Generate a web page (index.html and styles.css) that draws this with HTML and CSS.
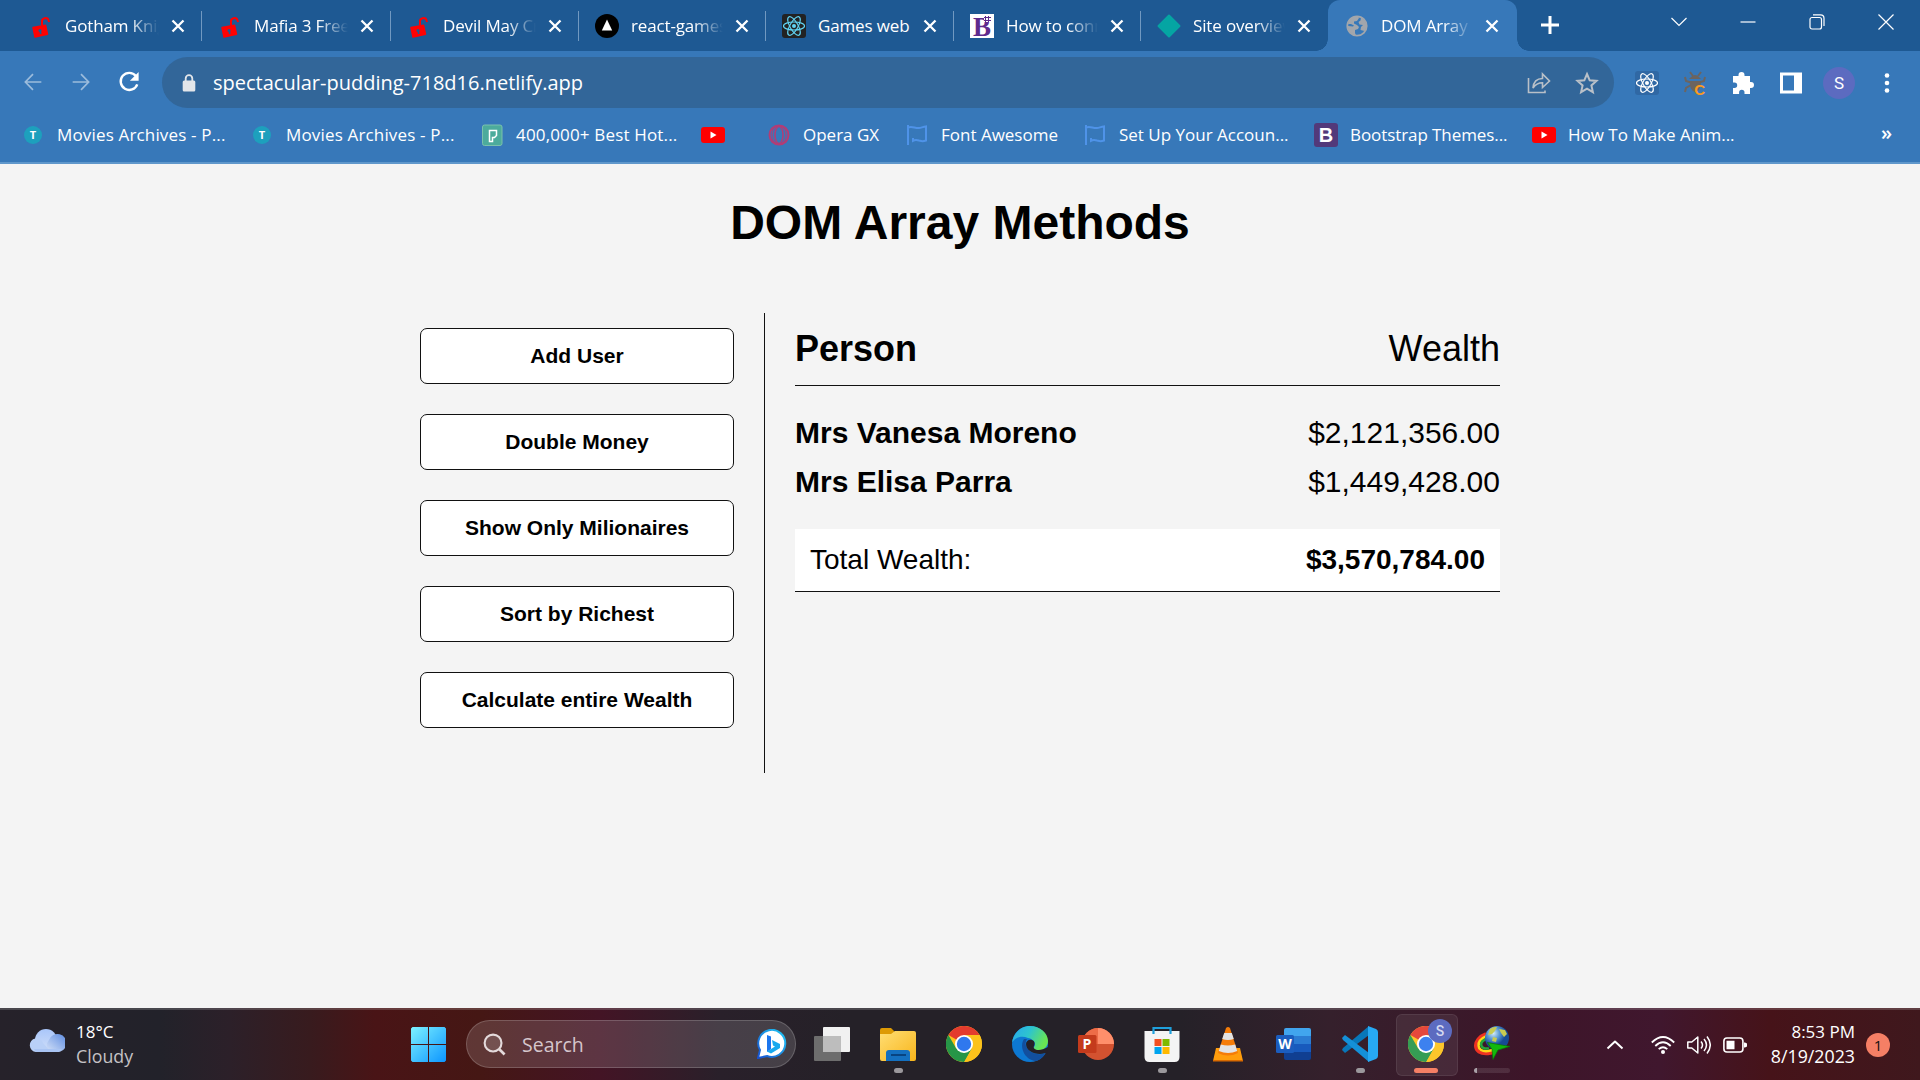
FILE: index.html
```html
<!DOCTYPE html>
<html lang="en">
<head>
<meta charset="utf-8">
<title>DOM Array Methods</title>
<link rel="stylesheet" href="styles.css">
</head>
<body>
<svg class="defs" aria-hidden="true">
  <defs>
    <symbol id="lock-open" viewBox="0 0 24 24"><g fill="#fe0202"><path d="M4 13.500l12.500-2.300 2 9-12.500 2.800z" stroke="#fe0202" stroke-width="1.500" stroke-linejoin="round"/><path d="M13 11V8c-.8-4 5.500-5.500 6.600-1.500l.5 1.500" fill="none" stroke="#fe0202" stroke-width="2"/></g><circle cx="11" cy="16.500" r="1.500" fill="#1e5993"/><path d="M10.500 17h1.600l.4 3h-1.600z" fill="#1e5993"/></symbol>
    <symbol id="close" viewBox="0 0 14 14"><path d="M1.500 1.500l11 11M12.500 1.500l-11 11" stroke="#fff" stroke-width="2.300"/></symbol>
    <symbol id="atom" viewBox="0 0 24 24"><g fill="none" stroke="currentColor" stroke-width="1.200"><ellipse cx="12" cy="12" rx="10.500" ry="4"/><ellipse cx="12" cy="12" rx="10.500" ry="4" transform="rotate(60 12 12)"/><ellipse cx="12" cy="12" rx="10.500" ry="4" transform="rotate(120 12 12)"/></g><circle cx="12" cy="12" r="2" fill="currentColor"/></symbol>
    <symbol id="youtube" viewBox="0 0 24 24"><rect y="4" width="24" height="16" rx="3" fill="#f00"/><path d="M9.500 8.500l6 3.500-6 3.500z" fill="#fff"/></symbol>
    <symbol id="flag" viewBox="0 0 24 24"><path d="M3 2v20M3 4.500c4-2 7 1 11 .5 2-.3 4-1 7-1.500v14c-4 1.500-5 .5-7 0-2-.6-4-.8-6 .3V15" fill="none" stroke="#4f93e8" stroke-width="2"/></symbol>
    <symbol id="chrome" viewBox="0 0 36 36"><circle cx="18" cy="18" r="18" fill="#fcc21b"/><path d="M18 18L2.400 9A18 18 0 0 1 33.600 9z" fill="#e33b2e"/><path d="M18 9h15.600L18 18z" fill="#e33b2e"/><path d="M2.400 9l7.800 13.500L18 27l.2 9A18 18 0 0 1 2.400 9z" fill="#269647"/><path d="M18.200 36L26 22.500 18 27 10.200 22.500z" fill="#269647"/><path d="M18 9h15.600A18 18 0 0 1 18.200 36L25.800 22.500z" fill="#fcc21b"/><circle cx="18" cy="18" r="9" fill="#fff"/><circle cx="18" cy="18" r="7.200" fill="#2f78ee"/></symbol>
  </defs>
</svg>

<div class="screen">
  <header class="browser">
    <div class="tabstrip">
      <div class="tabs">
        <div class="tab"><svg class="fav"><use href="#lock-open"/></svg><span class="tab-title">Gotham Knights</span><svg class="tab-close"><use href="#close"/></svg></div>
        <div class="tab"><svg class="fav"><use href="#lock-open"/></svg><span class="tab-title">Mafia 3 Free D</span><svg class="tab-close"><use href="#close"/></svg></div>
        <div class="tab"><svg class="fav"><use href="#lock-open"/></svg><span class="tab-title">Devil May Cry</span><svg class="tab-close"><use href="#close"/></svg></div>
        <div class="tab"><svg class="fav" viewBox="0 0 24 24"><circle cx="12" cy="12" r="12"/><path d="M12 5.500l5.200 11H6.800z" fill="#fff"/></svg><span class="tab-title">react-games-</span><svg class="tab-close"><use href="#close"/></svg></div>
        <div class="tab"><svg class="fav fav-react"><use href="#atom"/></svg><span class="tab-title plain">Games web</span><svg class="tab-close"><use href="#close"/></svg></div>
        <div class="tab"><span class="fav fav-b">B<i></i></span><span class="tab-title">How to conne</span><svg class="tab-close"><use href="#close"/></svg></div>
        <div class="tab last"><svg class="fav" viewBox="0 0 24 24"><path d="M12 1.500L22.500 12 12 22.500 1.500 12z" fill="#05a5a3" stroke="#05a5a3" stroke-width="2" stroke-linejoin="round"/></svg><span class="tab-title">Site overview</span><svg class="tab-close"><use href="#close"/></svg></div>
        <div class="tab active"><svg class="fav" viewBox="0 0 24 24"><circle cx="12" cy="12" r="9.700" fill="#3778b9" stroke="#a2a6ac" stroke-width="1.800"/><path d="M3 10c1-5 5-8 10-7.500l1 1.500-2 3-3 .5v2l3 1.500 2 2-1 2-3 1v3l1 2.500C6 21.500 2.500 16 3 12l5 .5 1-1L6 10z M16 3.500c4 2 6 6 5.500 10l-2 3.500-4-1 .5-3 2-2-3.500-.5-1-2.500 2-1.500z" fill="#a2a6ac"/></svg><span class="tab-title">DOM Array M</span><svg class="tab-close"><use href="#close"/></svg></div>
      </div>
      <svg class="new-tab" viewBox="0 0 20 20"><path d="M10 1v18M1 10h18" stroke="#fff" stroke-width="3"/></svg>
      <div class="window-controls">
        <svg viewBox="0 0 16 16"><path d="M.5 4L8 11.500 15.500 4" /></svg>
        <svg viewBox="0 0 16 16"><path d="M.5 8h15"/></svg>
        <svg viewBox="0 0 16 16"><rect x="1" y="3.500" width="11.500" height="11.500" rx="2"/><path d="M4 .8h7.500q3.500 0 3.500 3.500V12"/></svg>
        <svg viewBox="0 0 16 16"><path d="M.5.5l15 15M15.500.5l-15 15"/></svg>
      </div>
    </div>

    <div class="toolbar">
      <div class="nav">
        <svg viewBox="0 0 24 24" class="dim"><path d="M22 12H3M12 2.500L2.800 12l9.200 9.500" /></svg>
        <svg viewBox="0 0 24 24" class="dim"><path d="M2 12h19M12 2.500l9.200 9.500-9.200 9.500" /></svg>
        <svg viewBox="0 0 24 24"><path d="M19.500 5.500A9.300 9.300 0 1 0 21 14.500" class="reload"/><path d="M22.500 1v9.500H13z" fill="#fff" stroke="none"/></svg>
      </div>
      <div class="omnibox">
        <svg class="padlock" viewBox="0 0 14 18"><rect x=".7" y="6.500" width="12.600" height="11" rx="1.500" fill="#e3e6ea"/><path d="M3.700 8V4.500a3.300 3.300 0 0 1 6.600 0V8" fill="none" stroke="#e3e6ea" stroke-width="1.800"/></svg>
        <span class="url">spectacular-pudding-718d16.netlify.app</span>
        <svg class="omni-icon" viewBox="0 0 24 24"><path d="M1.500 7v14.500h16.500V19.500M6 17c.5-6 4-9.500 9.500-9.500V3l7 7-7 6.500v-4.700C11 11.800 8 14 6 17z" fill="none" stroke="#b9c0c8" stroke-width="1.600"/></svg>
        <svg class="omni-icon star" viewBox="0 0 24 24"><path d="M12 3l2.700 6.300 6.800.6-5.100 4.500 1.500 6.700L12 17.600l-5.900 3.500 1.500-6.700L2.500 9.900l6.800-.6z" fill="none" stroke="#b9c0c8" stroke-width="2"/></svg>
      </div>
      <div class="extensions">
        <svg class="ext-react"><use href="#atom"/></svg>
        <span class="ext-bug"><svg viewBox="0 0 24 24"><g fill="none" stroke="#6c645f" stroke-width="2"><path d="M7 1l3 4M18 1l-3 4M2 6l1 4 5 1.500M22 6l-1 4-5 1.500M2 21l1-4 5-3"/></g><path d="M8 6q4-4 8 0l2 2H6zM7 10h11q0 10-6 11Q6 19 7 10z" fill="#6c645f"/></svg><b>C</b></span>
        <svg viewBox="0 0 24 24"><path d="M2 5h5.500V4a3 3 0 0 1 6 0v1H19v6h1a3 3 0 0 1 0 6h-1v6h-5.500v-1.500a2.700 2.700 0 0 0-5.400 0V23H2v-6h1.500a2.700 2.700 0 0 0 0-5.400H2z" fill="#fff"/></svg>
        <svg viewBox="0 0 24 24"><path d="M1 1.500h22v21H1zM4 4.500v15h11v-15z" fill="#fff" fill-rule="evenodd"/></svg>
        <span class="avatar">S</span>
        <svg viewBox="0 0 24 24"><g fill="#fff"><circle cx="12" cy="4.500" r="2.300"/><circle cx="12" cy="12" r="2.300"/><circle cx="12" cy="19.500" r="2.300"/></g></svg>
      </div>
    </div>

    <nav class="bookmarks">
      <a class="wide"><span class="bm-icon"><i class="t-icon">T</i></span>Movies Archives - P...</a>
      <a class="wide"><span class="bm-icon"><i class="t-icon">T</i></span>Movies Archives - P...</a>
      <a class="wide"><svg class="bm-icon" viewBox="0 0 24 24"><rect x="2.500" y="2" width="19.500" height="20.500" rx="2" fill="#4cab9c" stroke="#7bc1ac"/><path d="M9.500 18.500V7.500h7v5l-2 2h-2v4z" fill="none" stroke="#fff" stroke-width="1.500"/></svg>400,000+ Best Hot...</a>
      <a><svg class="bm-icon"><use href="#youtube"/></svg></a>
      <a><svg class="bm-icon" viewBox="0 0 24 24"><g fill="none" stroke="#b33c75"><circle cx="12" cy="12" r="9.500" stroke-width="2"/><ellipse cx="12" cy="12" rx="4" ry="8.500" stroke-width="1.500"/><ellipse cx="12" cy="12" rx="7" ry="9" stroke-width="1"/></g></svg>Opera GX</a>
      <a><svg class="bm-icon"><use href="#flag"/></svg>Font Awesome</a>
      <a><svg class="bm-icon"><use href="#flag"/></svg>Set Up Your Accoun...</a>
      <a class="tight"><span class="bm-icon bootstrap">B</span>Bootstrap Themes...</a>
      <a><svg class="bm-icon"><use href="#youtube"/></svg>How To Make Anim...</a>
      <span class="more">»</span>
    </nav>
  </header>

  <main class="page">
    <h1>DOM Array Methods</h1>
    <div class="content">
      <aside>
        <button>Add User</button>
        <button>Double Money</button>
        <button>Show Only Milionaires</button>
        <button>Sort by Richest</button>
        <button>Calculate entire Wealth</button>
      </aside>
      <section class="people">
        <h2><strong>Person</strong><span>Wealth</span></h2>
        <div class="person"><strong>Mrs Vanesa Moreno</strong><span>$2,121,356.00</span></div>
        <div class="person"><strong>Mrs Elisa Parra</strong><span>$1,449,428.00</span></div>
        <h3><span>Total Wealth:</span><strong>$3,570,784.00</strong></h3>
      </section>
    </div>
  </main>

  <footer class="taskbar">
    <div class="weather">
      <svg viewBox="0 0 36 24"><defs><linearGradient id="cl" x2="0" y2="1"><stop stop-color="#a9c6fa"/><stop offset="1" stop-color="#cfdef8"/></linearGradient><linearGradient id="cr" x1="1" x2="0" y2="1"><stop stop-color="#5c8be0"/><stop offset="1" stop-color="#d5e2f8"/></linearGradient></defs><circle cx="17" cy="11" r="11" fill="url(#cl)"/><path d="M20 23a9 9 0 0 1 0-12 9 9 0 1 1 8 12z" fill="url(#cr)"/><path d="M7 23A6.800 6.800 0 1 1 14 14l8 9z" fill="#b9d0f7"/><path d="M5 20h28l-3 3H7z" fill="#a9c4f3"/></svg>
      <div><span>18°C</span><span class="muted">Cloudy</span></div>
    </div>
    <svg class="start" viewBox="0 0 35 35"><defs><linearGradient id="wn" x2="1" y2="1"><stop stop-color="#7df2ff"/><stop offset="1" stop-color="#0c95ff"/></linearGradient></defs><path d="M1.500 0H17v17H0V1.500zM18 0h15.500L35 1.500V17H18zM0 18h17v17H1.500L0 33.500zM18 18h17v15.500L33.500 35H18z" fill="url(#wn)"/></svg>
    <div class="search">
      <svg class="glass" viewBox="0 0 24 24"><circle cx="10.500" cy="10.500" r="8.800" fill="#fff2" stroke="#e4dadb" stroke-width="2.200"/><path d="M17 17l5.500 5.500" stroke="#e4dadb" stroke-width="2.800"/></svg>
      <span>Search</span>
      <svg class="bing" viewBox="0 0 30 30"><defs><linearGradient id="bg" x1="1" x2="0" y2="1"><stop stop-color="#20c9f5"/><stop offset="1" stop-color="#1750d0"/></linearGradient></defs><path d="M1 29l2-8a13.500 13.500 0 1 1 7 6z" fill="#fff" stroke="url(#bg)" stroke-width="2"/><path d="M10 6l4 1.500V20l-4 3z" fill="#1c76ee"/><path d="M15 11l8 4v4l-9 5.500-4-2 8-5-2-1z" fill="#17a9ee"/></svg>
    </div>
    <div class="apps">
      <div class="app"><svg viewBox="0 0 36 36"><rect x="9" y="1" width="27" height="25" rx="1" fill="#f1f1f1"/><rect x="0" y="10" width="27" height="25" rx="1" fill="#6d6d6d"/><path d="M9 10h18v16H9z" fill="#bdbdbd"/></svg></div>
      <div class="app open"><svg viewBox="0 0 36 36"><defs><linearGradient id="fd" x2="1" y2="1"><stop stop-color="#ffde74"/><stop offset="1" stop-color="#f8b51b"/></linearGradient></defs><path d="M0 9V4q0-2 2-2h9l4 4-2 4z" fill="#dd9a05"/><path d="M0 8h11l4-3h19q2 0 2 2v26q0 2-2 2H2q-2 0-2-2z" fill="url(#fd)"/><path d="M6 35V27q0-3 3-3h18q3 0 3 3v8z" fill="#1470c0"/><path d="M11 29h15" stroke="#07407a" stroke-width="1.800"/></svg></div>
      <div class="app"><svg><use href="#chrome"/></svg></div>
      <div class="app"><svg viewBox="0 0 36 36"><defs><linearGradient id="e1" x2="1" y2=".4"><stop stop-color="#28a7ef"/><stop offset=".5" stop-color="#2dc4cf"/><stop offset="1" stop-color="#68e553"/></linearGradient></defs><circle cx="18" cy="18" r="18" fill="#0d78d2"/><path d="M0 17C1 7 9 0 18 0c10 0 18 7 18 15 0 6-5 9.500-9 9.500-5 0-6-2-5-3.500 3-4-1-8-6-9C9 9 2 12 0 17z" fill="url(#e1)"/><path d="M12 13c-5 7 0 21 12 22 5-1 8-5 9.500-8-7 3-17 0-19.500-7-1-3 0-5.500 1-7z" fill="#124f9e"/><path d="M14 18c0-3 3-5 6-4 3 1 3 4 2 6-2 4 6 6 14 1v7l-3-1C26 30 14 26 14 18z" fill="#252027"/></svg></div>
      <div class="app"><svg viewBox="0 0 36 36"><circle cx="20" cy="18" r="16" fill="#d35230"/><path d="M20 2a16 16 0 0 1 16 16H20z" fill="#ff8f6b"/><path d="M20 2v16H4A16 16 0 0 1 20 2z" fill="#ed6c47"/><rect x="0" y="9" width="18.500" height="18" rx="1.500" fill="#c43b1c"/></svg><b class="letter">P</b></div>
      <div class="app open"><svg viewBox="0 0 36 36"><path d="M.5 5h35v26q0 5-5 5h-25q-5 0-5-5z" fill="#f4f4f4"/><path d="M9.500 8V2h17v6" fill="none" stroke="#1fa0dc" stroke-width="2.200"/><path d="M10.500 13h7v7h-7z" fill="#f25022"/><path d="M18.500 13h7v7h-7z" fill="#7fba00"/><path d="M10.500 21h7v7h-7z" fill="#00a4ef"/><path d="M18.500 21h7v7h-7z" fill="#ffb900"/></svg></div>
      <div class="app"><svg viewBox="0 0 36 36"><path d="M6 22h24l3 13H3z" fill="#ff9d0c"/><path d="M3 34h30v1.500H3z" fill="#d86a00"/><path d="M16 2q2-2 4 0l8 25q-10 5-20 0z" fill="#f57c08"/><path d="M14.200 7h7.600l2 6q-6 2-11.600 0zM10.800 18.500q7 2 14.400 0l2 6.500q-9 4-18.400 0z" fill="#e3e3e3"/></svg></div>
      <div class="app"><svg viewBox="0 0 36 36"><path d="M8 4q0-2 2-2h23q2 0 2 2v6H8z" fill="#41a5ee"/><path d="M8 10h27v8H8z" fill="#2b7cd3"/><path d="M8 18h27v8H8z" fill="#185abd"/><path d="M8 26h27v6q0 2-2 2H10q-2 0-2-2z" fill="#103f91"/><rect y="9" width="18" height="18" rx="1.500" fill="#1b5dbe"/></svg><b class="letter">W</b></div>
      <div class="app open"><svg viewBox="0 0 36 36"><path d="M0 24l3 3L27 9V0L1 22z" fill="#0877b9"/><path d="M0 12l3-3 24 18v9L1 14z" fill="#1490d8"/><path d="M26 0l8 3q2 1 2 3v24q0 2-2 3l-8 3z" fill="#27a9f3"/></svg></div>
      <div class="app current"><svg><use href="#chrome"/></svg><b class="profile">S</b></div>
      <div class="app loading"><svg viewBox="0 0 36 36"><defs><radialGradient id="gl" cx=".35" cy=".3"><stop stop-color="#d6edf8"/><stop offset=".5" stop-color="#5c9bd5"/><stop offset="1" stop-color="#164b95"/></radialGradient></defs><g fill="none"><path d="M12 8C-2 13-2 29 14 27.500l5-1" stroke="#ef3222" stroke-width="3.500"/><path d="M13 10C1 15 2 26.500 14 25l5-1" stroke="#ffd71a" stroke-width="2.500"/><path d="M13 12.500C4 16 6 23.500 15 22.500" stroke="#24a839" stroke-width="2.500"/></g><circle cx="23" cy="12" r="12" fill="url(#gl)"/><path d="M16 3q3-2.500 7-2l-2 4-3 3-4 1zM25 3l6 1 2 4-3 3-3-4zM19 11l4 1-1 4-4-1z" fill="#c8cb52"/><path d="M13.500 16.500L36 20.500l-12 3.500-5 9.500-1-10z" fill="#12b90c" stroke="#087406" stroke-width=".7"/></svg></div>
    </div>
    <div class="tray">
      <svg viewBox="0 0 24 24"><path d="M4.500 15.500L12 8.500l7.500 7" stroke-width="2"/></svg>
      <svg class="wifi" viewBox="0 0 24 24"><path d="M.8 9.500q11.200-11 22.400 0M4.300 13q7.700-7.500 15.400 0M7.700 16.200q4.300-4 8.600 0" stroke-width="1.800"/><circle cx="12" cy="19" r="2" fill="#fff" stroke="none"/></svg>
      <svg viewBox="0 0 24 24"><path d="M.8 9v6h4l6 5V4l-6 5zM14 8.500q3 3.500 0 7M17 6q5 6 0 12M20 3.500q6.500 8.500 0 17" stroke-width="1.500"/></svg>
      <svg class="battery" viewBox="0 0 24 24"><rect x=".9" y="5" width="19" height="14" rx="3" stroke-width="1.600"/><path d="M3.500 7.800h8v8.400h-8zM21 9.500h1l2 1v3l-2 1h-1z" fill="#fff" stroke="none"/></svg>
      <div class="clock"><span>8:53 PM</span><span class="date">8/19/2023</span></div>
      <span class="badge">1</span>
    </div>
  </footer>
</div>
</body>
</html>
```
FILE: styles.css
```css
* { box-sizing: border-box; }

body {
  margin: 0;
  overflow: hidden;
  font-family: "Open Sans", "Noto Sans", sans-serif;
}

svg { display: block; flex: none; }
.defs { position: absolute; width: 0; height: 0; }

.screen {
  display: flex;
  flex-direction: column;
  width: 1920px;
  height: 1080px;
}

/* Browser chrome */
.browser {
  flex: none;
  height: 164px;
  background: #3778b9;
  border-bottom: 2px solid #5f97cb;
  color: #fff;
}

.tabstrip {
  display: flex;
  height: 51px;
  padding-left: 13px;
  background: #1e5993;
}

.tabs {
  display: grid;
  grid-template-columns: 189px 189px 188px 187px 188px 187px 187px 189px;
}

.tab {
  position: relative;
  display: flex;
  align-items: center;
  padding: 1px 17px 0 16px;
}

.tab::after {
  content: "";
  position: absolute;
  right: 0;
  top: 11px;
  width: 1px;
  height: 30px;
  background: #7199c1;
}

.tab.last::after { display: none; }

.tab.active {
  padding: 1px 18px 0 17px;
  background: #3778b9;
  border-radius: 12px 12px 0 0;
}

.tab.active::before,
.tab.active::after {
  content: "";
  position: absolute;
  top: auto;
  bottom: 0;
  width: 12px;
  height: 12px;
}

.tab.active::before {
  left: -12px;
  background: radial-gradient(circle at 0 0, transparent 11.5px, #3778b9 12px);
}

.tab.active::after {
  right: -12px;
  background: radial-gradient(circle at 100% 0, transparent 11.5px, #3778b9 12px);
}

.fav {
  flex: none;
  width: 24px;
  height: 24px;
}

.fav-react {
  background: #222;
  border-radius: 3px;
  color: #61d4f4;
}

.fav-b {
  position: relative;
  background: #fff;
  color: #5f2a8c;
  font: bold 27px/27px "Liberation Serif", serif;
  text-align: center;
}

.fav-b i {
  position: absolute;
  right: 3px;
  top: 2px;
  width: 7px;
  height: 6px;
  background: radial-gradient(circle, #5f2a8c 1px, #fff 1.3px) 0 0 / 3px 3px;
}

.tab-title {
  flex: 1;
  width: 0;
  margin: 0 12px;
  overflow: hidden;
  white-space: nowrap;
  font-size: 17px;
  line-height: 24px;
  letter-spacing: -.15px;
  -webkit-mask-image: linear-gradient(90deg, #000 68%, transparent);
  mask-image: linear-gradient(90deg, #000 68%, transparent);
}

.tab-title.plain { -webkit-mask-image: none; mask-image: none; }

.tab-close { width: 14px; height: 14px; }

.new-tab {
  width: 20px;
  height: 20px;
  margin: 15px 0 0 23px;
}

.window-controls {
  display: flex;
  gap: 53px;
  margin: 14px 26px 0 auto;
}

.window-controls svg {
  width: 16px;
  height: 16px;
  fill: none;
  stroke: #fff;
  stroke-width: 1.2;
}

.toolbar {
  display: flex;
  align-items: center;
  height: 63px;
  padding-left: 23px;
}

.nav {
  display: flex;
  gap: 28px;
  width: 139px;
}

.nav svg {
  width: 20px;
  height: 20px;
  fill: none;
  stroke: #fff;
  stroke-width: 2;
}

.nav .dim { opacity: .5; }
.nav svg:last-child { width: 22px; height: 22px; margin: -1px 0 0 -1px; }
.nav .reload { stroke-width: 2.6; }

.omnibox {
  display: flex;
  align-items: center;
  width: 1452px;
  height: 51px;
  padding: 0 15px 0 20px;
  border-radius: 26px;
  background: #326699;
}

.padlock { width: 14px; height: 18px; }
.url { margin: 0 auto 1px 17px; font-size: 20px; }
.omni-icon { width: 24px; height: 24px; }
.star { margin-left: 24px; }

.extensions {
  display: flex;
  align-items: center;
  gap: 24px;
  margin-left: 21px;
}

.extensions > svg { width: 24px; height: 24px; }
.ext-react { background: #3068a4; border-radius: 3px; }

.ext-bug { position: relative; width: 24px; height: 24px; }
.ext-bug svg { width: 24px; height: 24px; }
.ext-bug b {
  position: absolute;
  right: 2px;
  bottom: -2px;
  color: #f79a1f;
  font: bold 15px/15px "Liberation Sans", sans-serif;
}

.avatar {
  width: 32px;
  height: 32px;
  margin: 0 -4px;
  border-radius: 50%;
  background: #5c6bc0;
  font: 17px/33px Roboto, sans-serif;
  text-align: center;
}

.bookmarks {
  display: grid;
  grid-template-columns: 229px 230px 221px 66px 138px 178px 231px 218px 349px 30px;
  align-items: center;
  height: 42px;
  padding-left: 21px;
  font-size: 17px;
  line-height: 24px;
}

.bookmarks a {
  display: flex;
  align-items: center;
  gap: 12px;
  margin-bottom: 1px;
  white-space: nowrap;
}

.bookmarks .wide { letter-spacing: .16px; }
.bookmarks .tight { letter-spacing: -.08px; }

.bm-icon { flex: none; width: 24px; height: 24px; }

.t-icon {
  display: block;
  width: 18px;
  height: 18px;
  margin: 3px;
  border-radius: 50%;
  background: #1da0bd;
  font: bold 11px/18px "Open Sans", sans-serif;
  text-align: center;
}

.bootstrap {
  border-radius: 3px;
  background: #52397a;
  font: bold 20px/24px "Liberation Sans", sans-serif;
  letter-spacing: 0;
  text-align: center;
}

.more { margin-bottom: 5px; font-size: 20px; font-weight: 600; }

/* Page */
.page {
  flex: none;
  height: 844px;
  background: #f4f4f4;
  color: #000;
  font-family: Arial, "Liberation Sans", sans-serif;
}

.page h1 {
  margin: 0;
  padding-top: 31px;
  font-size: 48px;
  line-height: 56px;
  text-align: center;
}

.content {
  display: flex;
  width: 1080px;
  margin: 62px auto 0;
}

.page aside {
  display: flex;
  flex-direction: column;
  gap: 30px;
  width: 345px;
  height: 460px;
  padding: 15px 30px 0 0;
  border-right: 1px solid #111;
}

.page button {
  flex: none;
  height: 56px;
  padding: 0;
  border: 1px solid #111;
  border-radius: 7px;
  background: #fff;
  color: #000;
  font: bold 21px "Liberation Sans", sans-serif;
}

.people { flex: 1; padding: 15px 0 0 30px; }

.people h2,
.people h3,
.person { display: flex; justify-content: space-between; }

.people h2 {
  margin: 0 0 22px;
  padding-bottom: 16px;
  border-bottom: 1px solid #111;
  font-size: 36px;
  font-weight: 400;
  line-height: 41px;
}

.person { font-size: 30px; line-height: 49px; }

.people h3 {
  height: 63px;
  margin: 23px 0 0;
  padding: 15px;
  border-bottom: 1px solid #111;
  background: #fff;
  font-size: 28px;
  font-weight: 400;
  line-height: 32px;
}

/* Taskbar */
.taskbar {
  display: flex;
  align-items: center;
  height: 72px;
  border-top: 2px solid #ffffff2b;
  background: linear-gradient(90deg, #26222a 0, #22222a 160px, #2c2029 230px, #381b1e 310px, #491416 375px, #451714 480px, #431425 600px, #29202a 720px, #252128 850px, #252128 1180px, #35202c 1330px, #3d1529 1530px, #40172e 1660px, #461319 1770px, #3f181d 1920px);
  color: #fff;
  font-size: 17px;
}

.weather {
  display: flex;
  align-items: center;
  gap: 11px;
  width: 382px;
  padding-left: 29px;
}

.weather svg { width: 36px; height: 24px; margin-bottom: 9px; }
.weather div, .clock { display: flex; flex-direction: column; margin-bottom: 2px; line-height: 24px; }
.muted { color: #c5c2c5; font-size: 17.8px; }

.start { width: 35px; height: 35px; margin: 0 0 1px 29px; }

.search {
  display: flex;
  align-items: center;
  width: 330px;
  height: 48px;
  margin: -2px 3px 0 20px;
  padding: 0 8px 0 16px;
  border: 1.5px solid #ffffff2e;
  border-radius: 24px;
  background: #ffffff24;
  color: #d5c6cc;
  font-size: 19.5px;
}

.glass { width: 23px; height: 23px; }
.search span { margin: 0 auto 0 16px; }
.bing { width: 30px; height: 30px; }

.apps { display: flex; }

.app {
  position: relative;
  display: grid;
  place-items: center;
  width: 66px;
  height: 70px;
  padding-bottom: 2px;
}

.app svg { width: 36px; height: 36px; }

.open::after,
.current::after,
.loading::after {
  content: "";
  position: absolute;
  left: 29px;
  bottom: 7px;
  width: 9px;
  height: 5px;
  border-radius: 3px;
  background: #9b989c;
}

.current::before {
  content: "";
  position: absolute;
  left: 3px;
  top: 4px;
  width: 60px;
  height: 60px;
  border: 1px solid #ffffff14;
  border-radius: 6px;
  background: #ffffff12;
}

.current::after { left: 21px; width: 24px; background: #f57f65; }

.loading::after {
  left: 15px;
  width: 36px;
  background: linear-gradient(90deg, #aaa1a8 3px, #ffffff1a 3px);
}

.letter {
  position: absolute;
  left: 15px;
  top: 25px;
  width: 18px;
  font: bold 14px/18px "Open Sans", sans-serif;
  text-align: center;
}

.profile {
  position: absolute;
  left: 35px;
  top: 9px;
  width: 24px;
  height: 24px;
  border-radius: 50%;
  background: #5c6bc0;
  color: #d4d8f0;
  font: 500 14px/24px Roboto, sans-serif;
  text-align: center;
}

.tray {
  display: flex;
  align-items: center;
  margin-left: auto;
  padding-right: 30px;
}

.tray svg {
  width: 24px;
  height: 24px;
  margin: 0 12px 1px 0;
  fill: none;
  stroke: #fff;
  stroke-linejoin: round;
}

.tray svg:first-child { margin-right: 24px; }
.clock { width: 96px; align-items: flex-end; }
.date { font-size: 17.8px; }

.badge {
  width: 24px;
  height: 24px;
  margin: 0 0 1px 11px;
  border-radius: 50%;
  background: #f57f65;
  color: #111;
  font-size: 15px;
  line-height: 24px;
  text-align: center;
}
```
